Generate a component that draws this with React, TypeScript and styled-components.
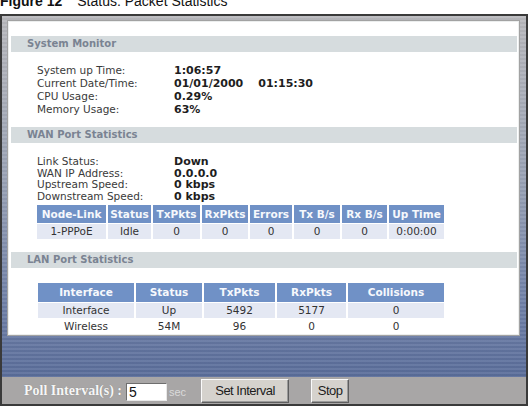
import React from "react";
import styled, { createGlobalStyle } from "styled-components";

interface InfoRow {
  label: string;
  value: React.ReactNode;
}

const wanRows: InfoRow[] = [
  { label: "Link Status:", value: "Down" },
  { label: "WAN IP Address:", value: "0.0.0.0" },
  { label: "Upstream Speed:", value: "0 kbps" },
  { label: "Downstream Speed:", value: "0 kbps" },
];

const wanCols = [
  { title: "Node-Link", w: 69 },
  { title: "Status", w: 43 },
  { title: "TxPkts", w: 47 },
  { title: "RxPkts", w: 46 },
  { title: "Errors", w: 42 },
  { title: "Tx B/s", w: 46 },
  { title: "Rx B/s", w: 45 },
  { title: "Up Time", w: 55 },
];
const wanData = [["1-PPPoE", "Idle", "0", "0", "0", "0", "0", "0:00:00"]];

const lanCols = [
  { title: "Interface", w: 96 },
  { title: "Status", w: 66 },
  { title: "TxPkts", w: 71 },
  { title: "RxPkts", w: 69 },
  { title: "Collisions", w: 96 },
];
const lanData = [
  ["Interface", "Up", "5492", "5177", "0"],
  ["Wireless", "54M", "96", "0", "0"],
];

const App: React.FC = () => {
  // built here so the styled span below is already defined
  const systemRows: InfoRow[] = [
    { label: "System up Time:", value: "1:06:57" },
    {
      label: "Current Date/Time:",
      value: (
        <>
          01/01/2000<TimeGap>01:15:30</TimeGap>
        </>
      ),
    },
    { label: "CPU Usage:", value: "0.29%" },
    { label: "Memory Usage:", value: "63%" },
  ];

  return (
    <Page>
      <GlobalStyle />
      <Caption>
        <CaptionLine>
          <b>Figure 12</b>
          <CaptionTitle>Status: Packet Statistics</CaptionTitle>
        </CaptionLine>
      </Caption>

      <Window>
        <Upper>
          <Panel>
            <Band>System Monitor</Band>
            <InfoGrid $top={12} $lh={13}>
              {systemRows.map((r) => (
                <React.Fragment key={r.label}>
                  <Label>{r.label}</Label>
                  <Value>{r.value}</Value>
                </React.Fragment>
              ))}
            </InfoGrid>

            <Band $top={11}>WAN Port Statistics</Band>
            <InfoGrid $top={13} $lh={11.7}>
              {wanRows.map((r) => (
                <React.Fragment key={r.label}>
                  <Label>{r.label}</Label>
                  <Value>{r.value}</Value>
                </React.Fragment>
              ))}
            </InfoGrid>
            <StatTable $top={1} $left={24}>
              <thead>
                <tr>
                  {wanCols.map((c) => (
                    <Th key={c.title} $w={c.w} $h={18}>
                      {c.title}
                    </Th>
                  ))}
                </tr>
              </thead>
              <tbody>
                {wanData.map((row, i) => (
                  <tr key={i}>
                    {row.map((cell, j) => (
                      <Td key={j} $h={15} $shade>
                        {cell}
                      </Td>
                    ))}
                  </tr>
                ))}
              </tbody>
            </StatTable>

            <Band $top={12}>LAN Port Statistics</Band>
            <StatTable $top={14} $left={25}>
              <thead>
                <tr>
                  {lanCols.map((c) => (
                    <Th key={c.title} $w={c.w} $h={19}>
                      {c.title}
                    </Th>
                  ))}
                </tr>
              </thead>
              <tbody>
                {lanData.map((row, i) => (
                  <tr key={i}>
                    {row.map((cell, j) => (
                      <Td key={j} $h={15} $shade={i % 2 === 0}>
                        {cell}
                      </Td>
                    ))}
                  </tr>
                ))}
              </tbody>
            </StatTable>
          </Panel>
        </Upper>

        <BottomBar>
          <PollLabel>Poll Interval(s) :</PollLabel>
          <PollInput defaultValue="5" />
          <Unit>sec</Unit>
          <FormButton $left={15} $w={88}>
            Set Interval
          </FormButton>
          <FormButton $left={22} $w={38}>
            Stop
          </FormButton>
        </BottomBar>
      </Window>
    </Page>
  );
};

export default App;

const GlobalStyle = createGlobalStyle`
  html, body {
    margin: 0;
    padding: 0;
    background: #ffffff;
    overflow: hidden;
  }
  * {
    box-sizing: border-box;
  }
`;

const Page = styled.div`
  width: 528px;
  height: 406px;
  display: flex;
  flex-direction: column;
`;

const Caption = styled.div`
  height: 14px;
  overflow: hidden;
  flex: none;
`;

const CaptionLine = styled.div`
  margin-top: -6px;
  font-family: "Liberation Sans", Arial, sans-serif;
  font-size: 14px;
  line-height: 14px;
  color: #111;
  white-space: nowrap;
`;

const CaptionTitle = styled.span`
  margin-left: 15px;
`;

const Window = styled.div`
  flex: 1;
  display: flex;
  flex-direction: column;
  border: 2px solid #3a3a3a;
`;

const Upper = styled.div`
  flex: 1;
  padding: 4px 6px 0 5px;
  background: repeating-linear-gradient(
      to bottom,
      rgba(255, 255, 255, 0.07) 0 2px,
      rgba(0, 0, 0, 0.03) 2px 4px
    ),
    linear-gradient(
      to bottom,
      #b9b9bd 0%,
      #9aa3b6 45%,
      #6f80a8 80%,
      #5a6d9a 100%
    );
`;

const Panel = styled.div`
  height: 316px;
  background: #ffffff;
  border: 1px solid #a2a2a2;
  box-shadow: inset 0 0 0 1px #eceeee;
  padding: 15px 2px 0 3px;
  font-family: "DejaVu Sans", Verdana, sans-serif;
`;

const Band = styled.div<{ $top?: number }>`
  margin-top: ${({ $top }) => $top ?? 0}px;
  height: 16px;
  line-height: 16px;
  padding-left: 16px;
  background: #d6dcde;
  color: #7a8392;
  font-size: 10px;
  font-weight: bold;
`;

const InfoGrid = styled.div<{ $top: number; $lh: number }>`
  margin-top: ${({ $top }) => $top}px;
  padding-left: 26px;
  display: grid;
  grid-template-columns: 137px 1fr;
  line-height: ${({ $lh }) => $lh}px;
`;

const Label = styled.span`
  font-size: 10.5px;
  color: #3a3a3a;
`;

const Value = styled.span`
  font-size: 11px;
  font-weight: bold;
  color: #1e1e1e;
`;

const TimeGap = styled.span`
  margin-left: 15px;
`;

const StatTable = styled.table<{ $top: number; $left: number }>`
  margin-top: ${({ $top }) => $top}px;
  margin-left: ${({ $left }) => $left}px;
  border-collapse: separate;
  border-spacing: 2px 1px;
  font-size: 10.5px;
`;

const Th = styled.th<{ $w: number; $h: number }>`
  width: ${({ $w }) => $w}px;
  height: ${({ $h }) => $h}px;
  padding: 0;
  background: #7091c6;
  color: #f6f8fc;
  font-weight: bold;
  text-align: center;
  white-space: nowrap;
`;

const Td = styled.td<{ $h: number; $shade?: boolean }>`
  height: ${({ $h }) => $h}px;
  padding: 0;
  background: ${({ $shade }) => ($shade ? "#e4e8f3" : "#ffffff")};
  color: #333;
  text-align: center;
  white-space: nowrap;
`;

const BottomBar = styled.div`
  flex: none;
  height: 27px;
  display: flex;
  align-items: center;
  padding-left: 22px;
  background: #a8a6a6;
`;

const PollLabel = styled.span`
  font-family: "Liberation Serif", "Times New Roman", serif;
  font-size: 14px;
  font-weight: bold;
  color: #f6f6f6;
  text-shadow: 0 0 1px rgba(0, 0, 0, 0.25);
  white-space: nowrap;
`;

const PollInput = styled.input`
  margin-left: 4px;
  width: 41px;
  height: 18px;
  margin-top: 2px;
  padding: 0 2px;
  border: 1px solid;
  border-color: #6e6e6e #e8e8e8 #e8e8e8 #6e6e6e;
  background: #ffffff;
  font-family: "Liberation Sans", Arial, sans-serif;
  font-size: 14px;
  color: #111;
  outline: none;
`;

const Unit = styled.span`
  margin-left: 2px;
  margin-top: 3px;
  font-family: "Liberation Sans", Arial, sans-serif;
  font-size: 11px;
  color: #dadada;
`;

const FormButton = styled.button<{ $left: number; $w: number }>`
  margin-left: ${({ $left }) => $left}px;
  width: ${({ $w }) => $w}px;
  height: 24px;
  padding: 0;
  background: #d5d2cd;
  border: 1px solid;
  border-color: #fbfbfb #5e5e5e #5e5e5e #fbfbfb;
  box-shadow: inset -1px -1px 0 #9a9a9a;
  font-family: "Liberation Sans", Arial, sans-serif;
  font-size: 13px;
  letter-spacing: -0.5px;
  color: #1c1c1c;
  cursor: pointer;
`;
